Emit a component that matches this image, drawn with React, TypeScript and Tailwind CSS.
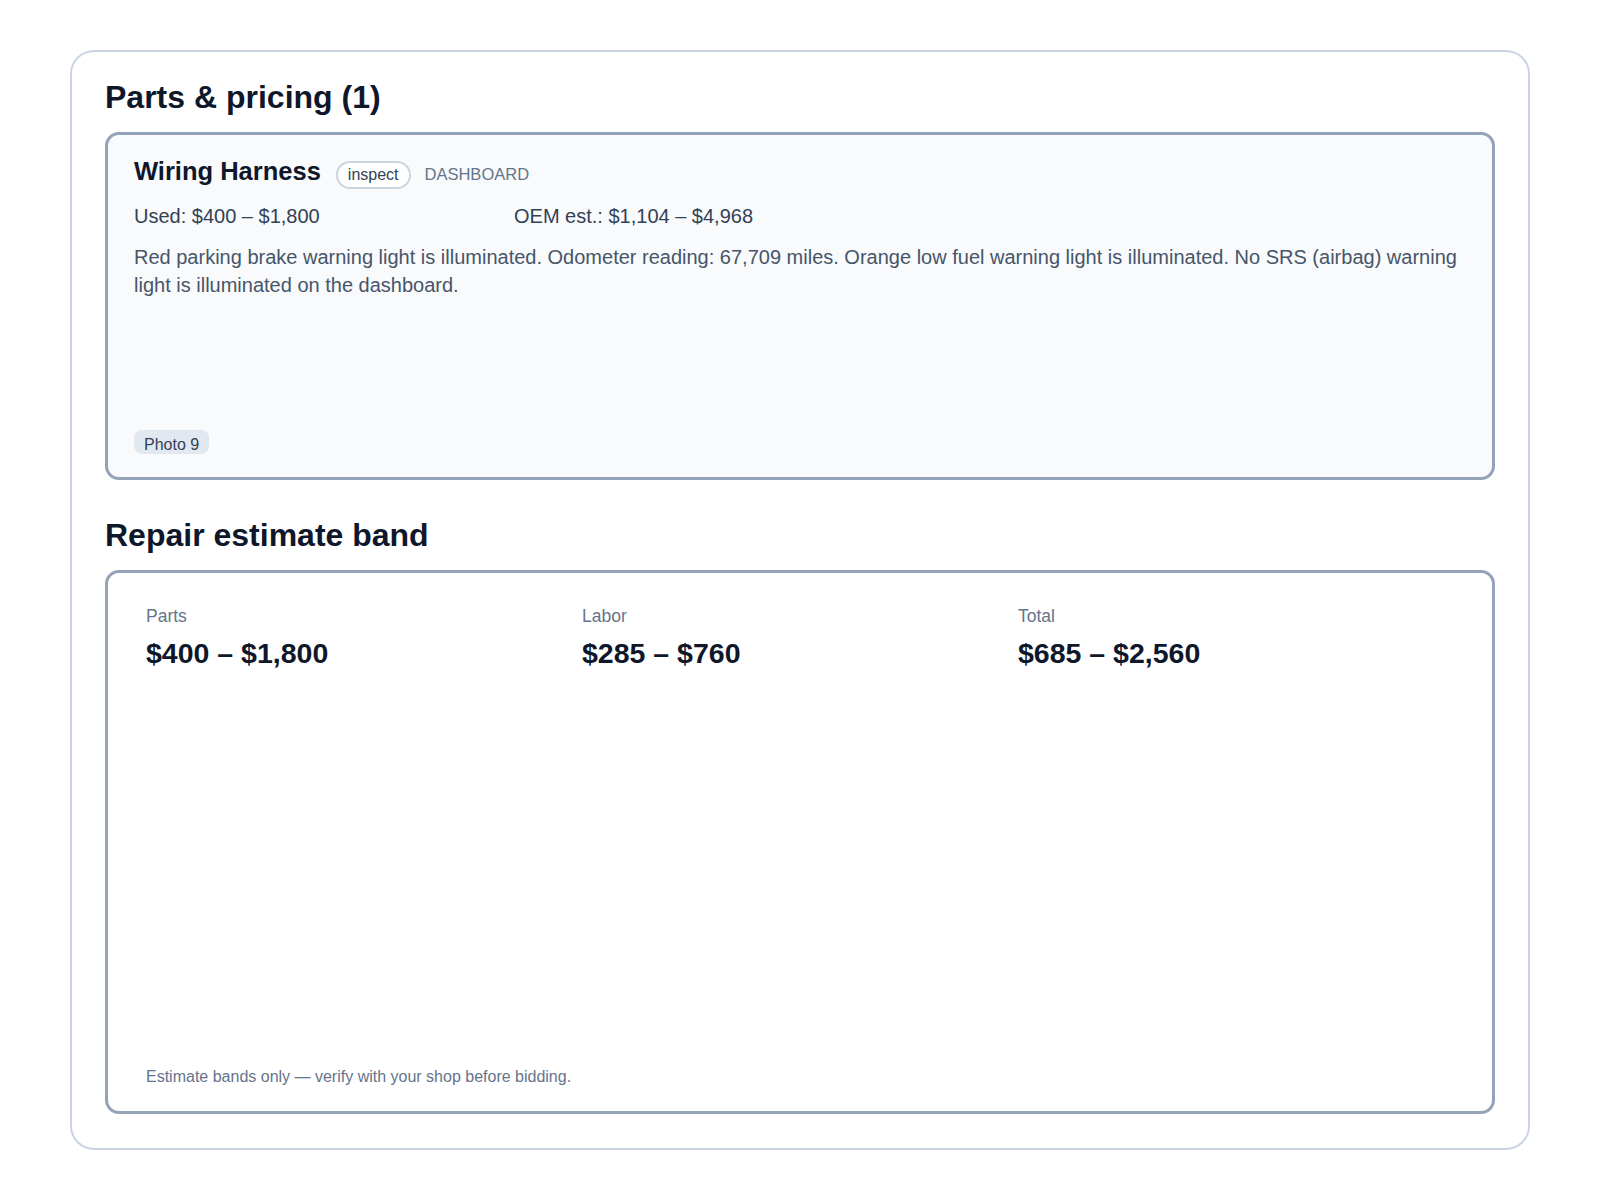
export default function App() {
  return (
    <div
      className="min-h-[1200px] bg-white pt-[50px] pb-[50px]"
      style={{ fontFamily: '"Liberation Sans", Arial, sans-serif' }}
    >
      <div className="mx-[70px] border-2 border-[#cbd5e1] rounded-[24px] bg-white px-[33px] pt-[26px] pb-[34px]">
        <h2 className="text-[32px] font-bold leading-[38px] text-[#0f172a]">Parts &amp; pricing (1)</h2>

        <div className="mt-[16px] h-[348px] flex flex-col border-[3px] border-[#94a3b8] bg-[#f8fafc] rounded-[14px] px-[26px] pt-[20px] pb-[23px]">
          <div className="flex items-baseline">
            <span className="text-[25.5px] font-bold leading-[32px] text-[#0f172a]">Wiring Harness</span>
            <span className="ml-[15px] border-2 border-[#cbd5e1] bg-white rounded-full px-[10px] text-[16px] leading-[24px] text-[#334155]">
              inspect
            </span>
            <span className="ml-[14px] text-[16.5px] leading-[24px] text-[#64748b] uppercase">Dashboard</span>
          </div>
          <div className="mt-[13px] flex text-[20px] leading-[28px] text-[#334155]">
            <span className="w-[380px]">Used: $400 – $1,800</span>
            <span>OEM est.: $1,104 – $4,968</span>
          </div>
          <p className="mt-[13px] text-[20px] leading-[28px] text-[#475569]">
            Red parking brake warning light is illuminated. Odometer reading: 67,709 miles. Orange low fuel warning light is illuminated. No SRS (airbag) warning light is illuminated on the dashboard.
          </p>
          <span className="mt-auto self-start bg-[#e2e8f0] rounded-[8px] px-[10px] pt-[5px] text-[16px] leading-[19px] text-[#334155]">
            Photo 9
          </span>
        </div>

        <h2 className="mt-[36px] text-[32px] font-bold leading-[38px] text-[#0f172a]">Repair estimate band</h2>

        <div className="mt-[16px] h-[544px] flex flex-col border-[3px] border-[#94a3b8] bg-white rounded-[14px] px-[38px] pt-[31px] pb-[22px]">
          <div className="grid grid-cols-3">
            {[
              ["Parts", "$400 – $1,800"],
              ["Labor", "$285 – $760"],
              ["Total", "$685 – $2,560"],
            ].map(([label, value]) => (
              <div key={label}>
                <div className="text-[17.5px] leading-[24px] text-[#64748b]">{label}</div>
                <div className="mt-[8px] text-[28.5px] font-bold leading-[34px] text-[#0f172a]">{value}</div>
              </div>
            ))}
          </div>
          <p className="mt-auto text-[16px] leading-[24px] text-[#64748b]">
            Estimate bands only — verify with your shop before bidding.
          </p>
        </div>
      </div>
    </div>
  );
}
